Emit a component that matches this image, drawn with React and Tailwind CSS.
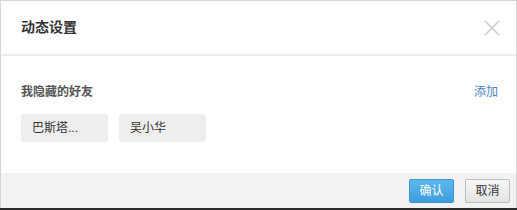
export default function App() {
  const hidden = ["巴斯塔...", "吴小华"];

  return (
    <div
      className="w-[517px] h-[210px] bg-[#1f1f1f] overflow-hidden"
      style={{ fontFamily: '"Liberation Sans", "Noto Sans CJK SC", sans-serif' }}
    >
      <div className="h-[208px] bg-white border-t border-x border-[#d4d4d4] flex flex-col">
        {/* Header */}
        <div className="h-[55px] shrink-0 flex items-center justify-between pl-[20px] pr-[16px] border-b-2 border-[#ececec]">
          <span className="text-[14px] font-bold text-[#333]">动态设置</span>
          <svg width="16" height="16" viewBox="0 0 16 16" className="text-[#cccccc]">
            <path d="M1 1L15 15M15 1L1 15" stroke="currentColor" strokeWidth="1.6" fill="none" />
          </svg>
        </div>

        {/* Body */}
        <div className="flex-1 pt-[28px] px-[20px]">
          <div className="flex items-center justify-between leading-[16px]">
            <span className="text-[12px] font-bold text-[#555]">我隐藏的好友</span>
            <a className="text-[12px] text-[#4a7fc4] mr-[-2px]">添加</a>
          </div>
          <div className="flex gap-[11px] mt-[14px]">
            {hidden.map((name) => (
              <div
                key={name}
                className="w-[87px] h-[28px] rounded-[3px] bg-[#eeeeee] text-[12px] text-[#333] flex items-center pl-[11px]"
              >
                {name}
              </div>
            ))}
          </div>
        </div>

        {/* Footer */}
        <div className="h-[35px] shrink-0 bg-[#f2f2f2] flex items-start justify-end gap-[11px] pt-[6px] pr-[6px]">
          <button className="w-[45px] h-[24px] rounded-[2px] border border-[#3a94d4] bg-gradient-to-b from-[#5cb8ee] to-[#3d9ddd] text-white text-[12px] leading-none">
            确认
          </button>
          <button className="w-[45px] h-[24px] rounded-[2px] border border-[#bdbdbd] bg-gradient-to-b from-[#f8f8f8] to-[#e4e4e4] text-[#333] text-[12px] leading-none">
            取消
          </button>
        </div>
      </div>
      <div className="h-[2px] bg-[#2b2b2b]" />
    </div>
  );
}
